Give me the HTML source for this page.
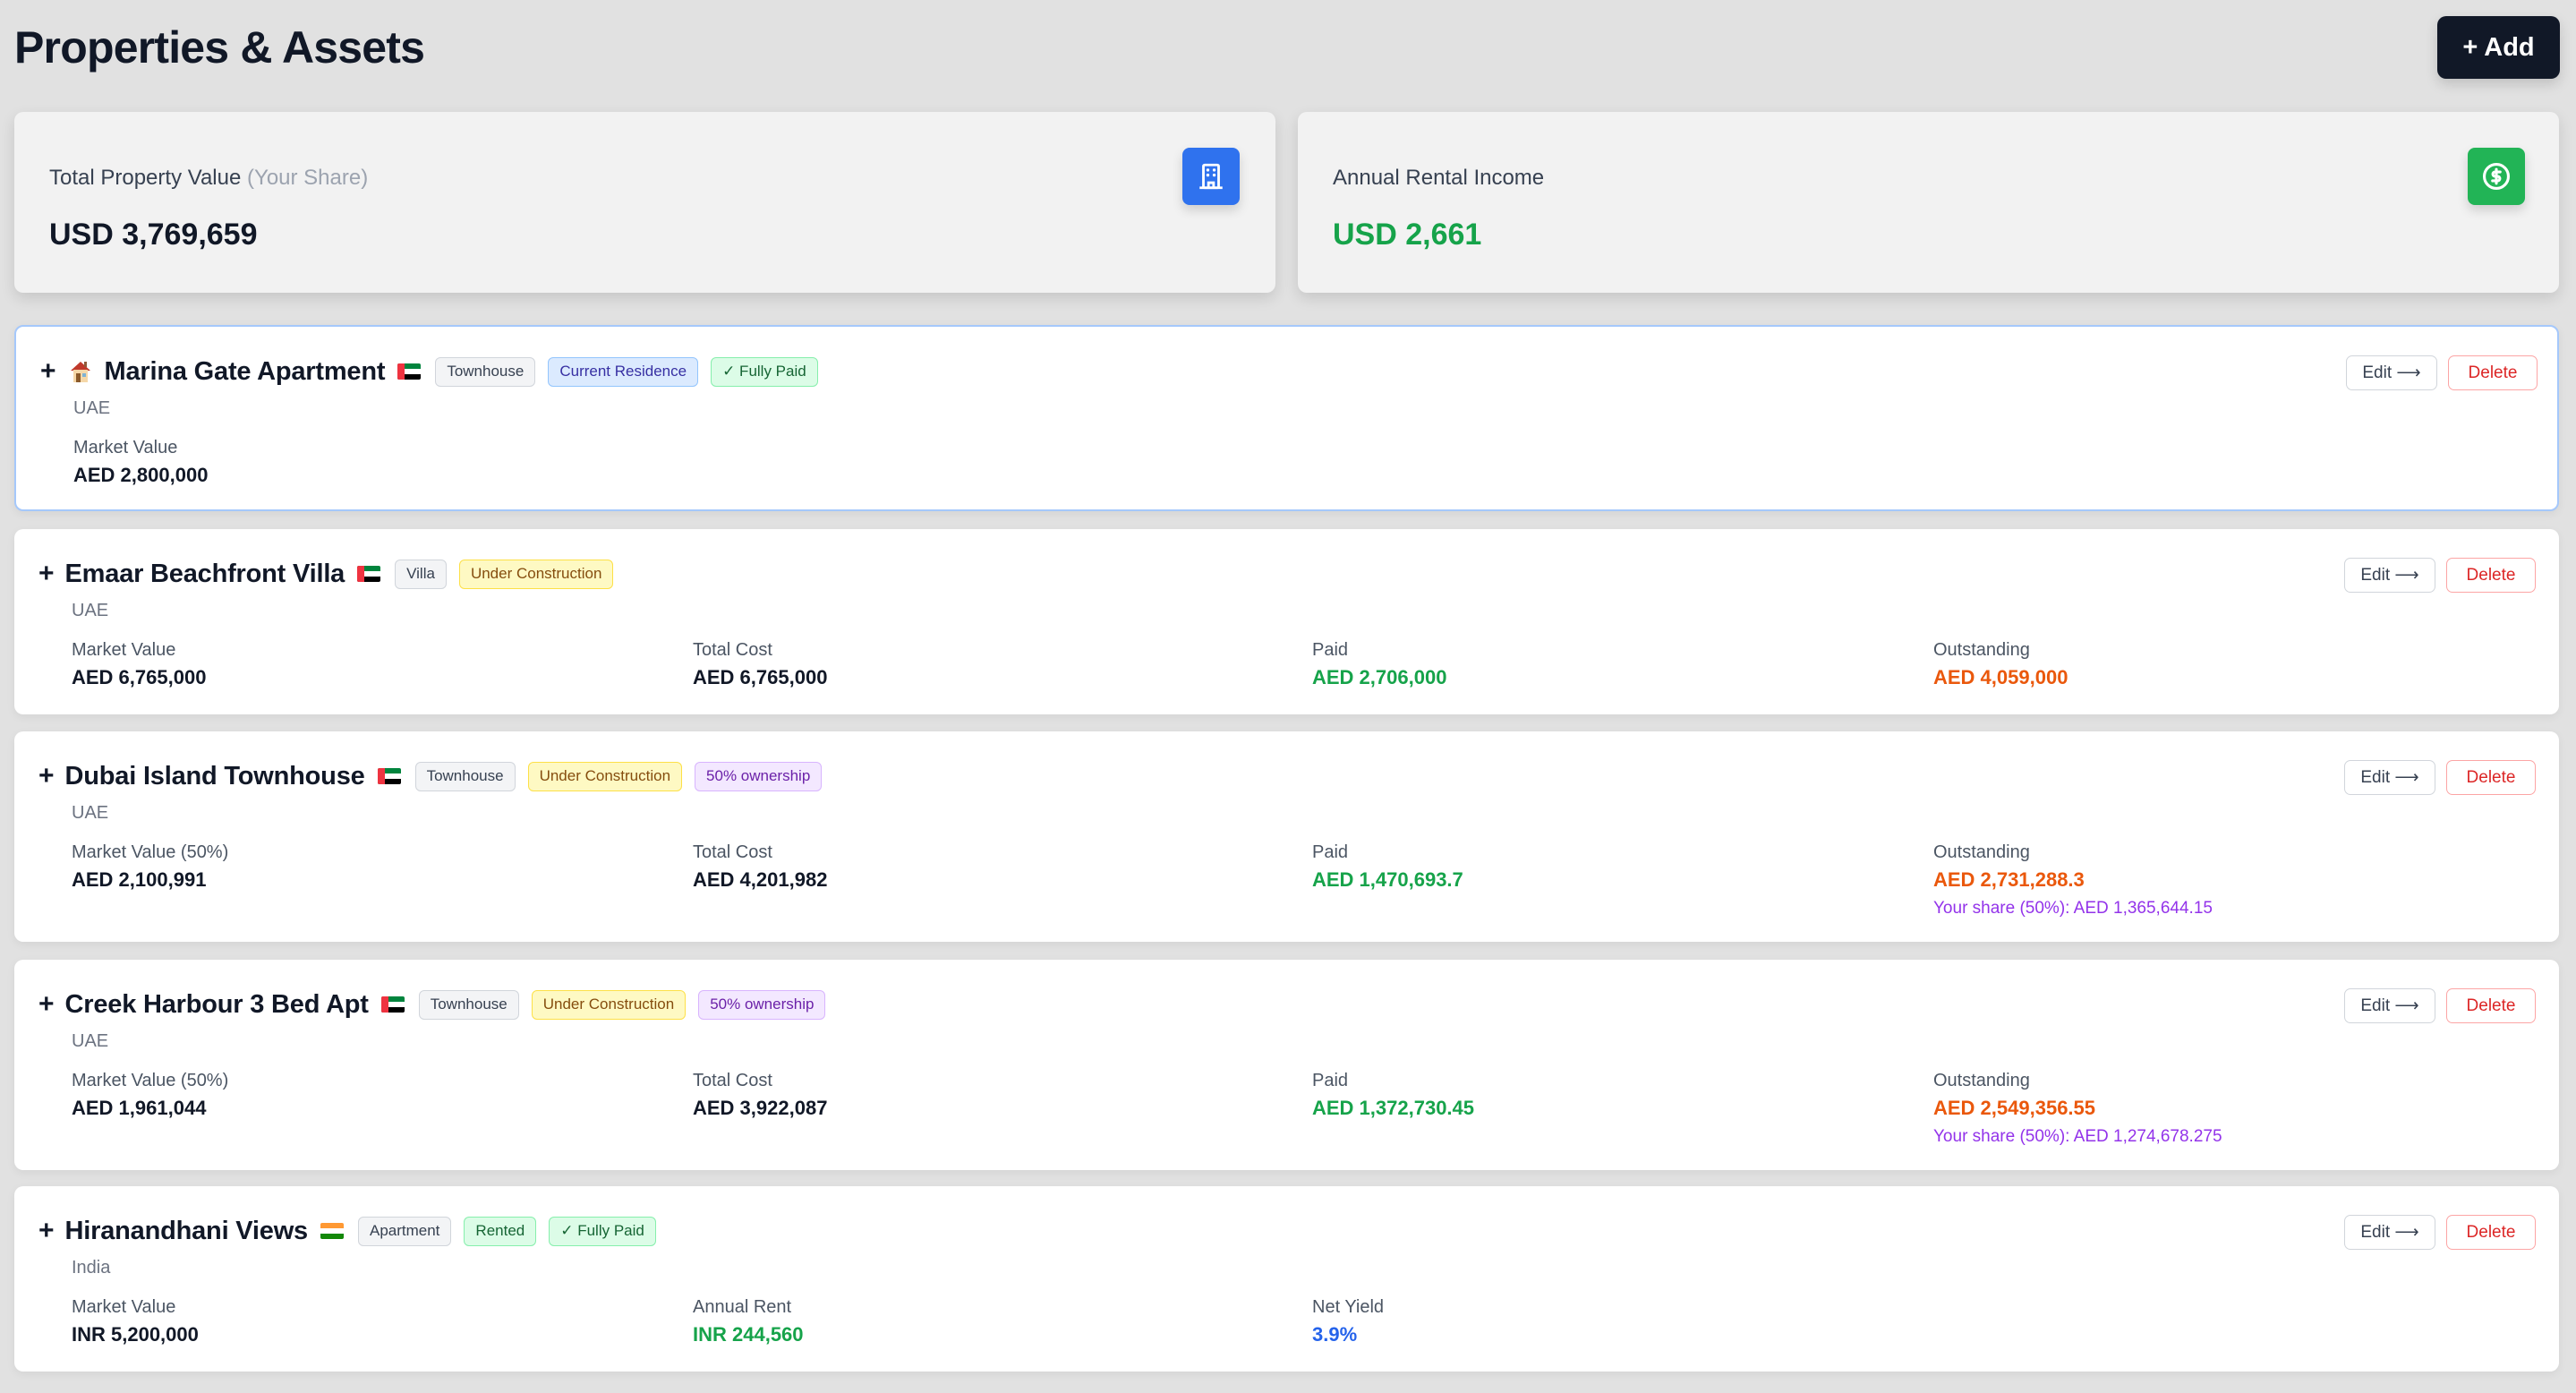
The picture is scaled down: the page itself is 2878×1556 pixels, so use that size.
<!DOCTYPE html>
<html><head><meta charset="utf-8"><style>
*{box-sizing:border-box;margin:0;padding:0}
body{width:2878px;height:1556px;background:#e1e1e1;font-family:"Liberation Sans",sans-serif;color:#111827;position:relative;overflow:hidden}
h1{position:absolute;left:16px;top:24px;font-size:50px;font-weight:700;color:#111827;letter-spacing:-0.8px}
.add{position:absolute;left:2723px;top:18px;width:137px;height:70px;background:#111827;color:#fff;border-radius:10px;font-size:29px;font-weight:700;display:flex;align-items:center;justify-content:center;box-shadow:0 6px 14px rgba(0,0,0,.15)}
.stat{position:absolute;top:125px;height:202px;width:1409px;background:#f2f2f2;border-radius:10px;box-shadow:0 6px 16px rgba(0,0,0,.12)}
.stat .lbl{position:absolute;left:39px;top:60px;font-size:24px;color:#374151}
.stat .val{position:absolute;left:39px;top:118px;font-size:34px;font-weight:700}
.stat .ic{position:absolute;top:40px;width:64px;height:64px;border-radius:8px;display:flex;align-items:center;justify-content:center;box-shadow:0 6px 12px rgba(0,0,0,.15)}
.card{position:absolute;left:16px;width:2843px;background:#fff;border-radius:10px;box-shadow:0 3px 10px rgba(0,0,0,.06)}
.trow{position:absolute;left:27px;top:32px;height:36px;display:flex;align-items:center;white-space:nowrap}
.plus{font-size:30px;font-weight:700;margin-right:12px}
.tt{font-size:29px;font-weight:700;margin-right:14px;letter-spacing:-0.2px}
.flag{width:26px;height:18px;display:inline-block;margin-right:16px;border-radius:2px;overflow:hidden;position:relative}
.uae{background:linear-gradient(#00843d 0 33%,#fff 33% 66%,#000 66%)}
.uae:before{content:"";position:absolute;left:0;top:0;width:8px;height:100%;background:#ef3340}
.ind{background:linear-gradient(#ff9933 0 33%,#fff 33% 66%,#138808 66%)}
.b{height:33px;padding:0 12px;border-radius:6px;font-size:17px;display:inline-flex;align-items:center;margin-right:14px;border:1.5px solid}
.g{background:#f3f4f6;border-color:#d1d5db;color:#374151}
.bl{background:#dbeafe;border-color:#93c5fd;color:#3730a3}
.gr{background:#dcfce7;border-color:#86efac;color:#166534}
.y{background:#fef9c3;border-color:#fde047;color:#854d0e}
.p{background:#f3e8ff;border-color:#d8b4fe;color:#6b21a8}
.cty{position:absolute;left:64px;top:80px;font-size:20px;color:#6b7280}
.col{position:absolute;top:124px}
.col .l{font-size:20px;color:#4b5563;height:26px}
.col .v{font-size:22px;font-weight:700;margin-top:3px}
.col .s{font-size:19px;color:#9333ea;margin-top:8px}
.edit,.del{position:absolute;top:32px;height:39px;border-radius:7px;font-size:19px;display:flex;align-items:center;justify-content:center;background:#fff}
.edit{left:2603px;width:102px;border:1.5px solid #d1d5db;color:#374151}
.del{left:2717px;width:100px;border:1.5px solid #fca5a5;color:#dc2626}
.green{color:#16a34a}.orange{color:#ea580c}.blue{color:#2563eb}
</style></head><body>
<h1>Properties &amp; Assets</h1>
<div class="add">+ Add</div>

<div class="stat" style="left:16px">
<div class="lbl">Total Property Value <span style="color:#9ca3af">(Your Share)</span></div>
<div class="val">USD 3,769,659</div>
<div class="ic" style="left:1305px;background:#2f72ee"><svg width="34" height="34" viewBox="0 0 24 24" fill="none" stroke="#fff" stroke-width="2"><rect x="6" y="3" width="12" height="18" rx="1"/><path d="M3 21h18M10 21v-4h4v4"/><path d="M9.5 7h.01M14.5 7h.01M9.5 11h.01M14.5 11h.01" stroke-linecap="round" stroke-width="2.4"/></svg></div>
</div>
<div class="stat" style="left:1450px">
<div class="lbl">Annual Rental Income</div>
<div class="val green">USD 2,661</div>
<div class="ic" style="left:1307px;background:#22b456"><svg width="34" height="34" viewBox="0 0 24 24" fill="none" stroke="#fff" stroke-width="2.2"><circle cx="12" cy="12" r="9.5"/><path d="M15 8.5h-4a1.75 1.75 0 0 0 0 3.5h2a1.75 1.75 0 0 1 0 3.5H9M12 6.5v11" stroke-linecap="round"/></svg></div>
</div>

<div class="card" style="top:363px;height:208px;border:2px solid #a5c8fb">
<div class="trow"><span class="plus">+</span><svg width="30" height="30" viewBox="0 0 30 30" style="margin-right:12px"><path d="M4 14L15 4l11 10" fill="#c0392b"/><rect x="7" y="13" width="16" height="14" fill="#f5d7a8"/><rect x="10" y="17" width="5" height="10" fill="#8b5a2b"/><rect x="17" y="17" width="4" height="4" fill="#7fb3d5"/><rect x="19" y="4" width="3" height="6" fill="#8e5a3a"/></svg><span class="tt">Marina Gate Apartment</span><span class="flag uae"></span><span class="b g">Townhouse</span><span class="b bl">Current Residence</span><span class="b gr">✓ Fully Paid</span></div>
<div class="edit">Edit ⟶</div><div class="del">Delete</div>
<div class="cty">UAE</div>
<div class="col" style="left:64px"><div class="l">Market Value</div><div class="v">AED 2,800,000</div></div>
</div>

<div class="card" style="top:591px;height:207px">
<div class="trow"><span class="plus">+</span><span class="tt">Emaar Beachfront Villa</span><span class="flag uae"></span><span class="b g">Villa</span><span class="b y">Under Construction</span></div>
<div class="edit">Edit ⟶</div><div class="del">Delete</div>
<div class="cty">UAE</div>
<div class="col" style="left:64px"><div class="l">Market Value</div><div class="v">AED 6,765,000</div></div>
<div class="col" style="left:758px"><div class="l">Total Cost</div><div class="v">AED 6,765,000</div></div>
<div class="col" style="left:1450px"><div class="l">Paid</div><div class="v green">AED 2,706,000</div></div>
<div class="col" style="left:2144px"><div class="l">Outstanding</div><div class="v orange">AED 4,059,000</div></div>
</div>

<div class="card" style="top:817px;height:235px">
<div class="trow"><span class="plus">+</span><span class="tt">Dubai Island Townhouse</span><span class="flag uae"></span><span class="b g">Townhouse</span><span class="b y">Under Construction</span><span class="b p">50% ownership</span></div>
<div class="edit">Edit ⟶</div><div class="del">Delete</div>
<div class="cty">UAE</div>
<div class="col" style="left:64px"><div class="l">Market Value (50%)</div><div class="v">AED 2,100,991</div></div>
<div class="col" style="left:758px"><div class="l">Total Cost</div><div class="v">AED 4,201,982</div></div>
<div class="col" style="left:1450px"><div class="l">Paid</div><div class="v green">AED 1,470,693.7</div></div>
<div class="col" style="left:2144px"><div class="l">Outstanding</div><div class="v orange">AED 2,731,288.3</div><div class="s">Your share (50%): AED 1,365,644.15</div></div>
</div>

<div class="card" style="top:1072px;height:235px">
<div class="trow"><span class="plus">+</span><span class="tt">Creek Harbour 3 Bed Apt</span><span class="flag uae"></span><span class="b g">Townhouse</span><span class="b y">Under Construction</span><span class="b p">50% ownership</span></div>
<div class="edit">Edit ⟶</div><div class="del">Delete</div>
<div class="cty">UAE</div>
<div class="col" style="left:64px"><div class="l">Market Value (50%)</div><div class="v">AED 1,961,044</div></div>
<div class="col" style="left:758px"><div class="l">Total Cost</div><div class="v">AED 3,922,087</div></div>
<div class="col" style="left:1450px"><div class="l">Paid</div><div class="v green">AED 1,372,730.45</div></div>
<div class="col" style="left:2144px"><div class="l">Outstanding</div><div class="v orange">AED 2,549,356.55</div><div class="s">Your share (50%): AED 1,274,678.275</div></div>
</div>

<div class="card" style="top:1325px;height:207px">
<div class="trow"><span class="plus">+</span><span class="tt">Hiranandhani Views</span><span class="flag ind"></span><span class="b g">Apartment</span><span class="b gr">Rented</span><span class="b gr">✓ Fully Paid</span></div>
<div class="edit">Edit ⟶</div><div class="del">Delete</div>
<div class="cty">India</div>
<div class="col" style="left:64px"><div class="l">Market Value</div><div class="v">INR 5,200,000</div></div>
<div class="col" style="left:758px"><div class="l">Annual Rent</div><div class="v green">INR 244,560</div></div>
<div class="col" style="left:1450px"><div class="l">Net Yield</div><div class="v blue">3.9%</div></div>
</div>
</body></html>
